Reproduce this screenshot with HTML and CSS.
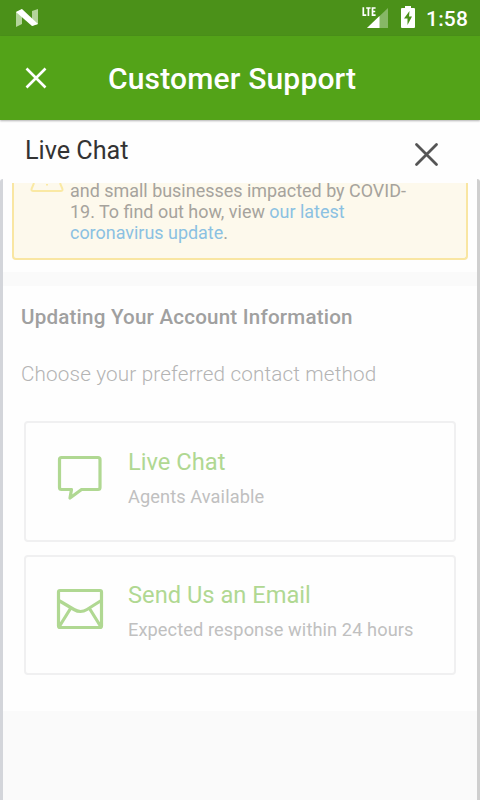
FILE: index.html
```html
<!DOCTYPE html>
<html lang="en">
<head>
<meta charset="utf-8">
<title>Customer Support</title>
<link rel="stylesheet" href="styles.css">
</head>
<body>
<div class="status">
  <svg class="n-logo" width="24" height="20" viewBox="0 0 24 20"><path d="M1 4L7 1v15l-6 3zM17 3l6-2v15l-6 2z" fill="#b4d49b"/><path d="M1 4l6-3 16 15-6 2z" fill="#fff"/></svg>
  <svg class="signal" width="28" height="24" viewBox="0 0 28 24"><path d="M6 22L27 2v20z" fill="#87b766"/><path d="M6 22L18.500 10v12z" fill="#fff"/><path d="M2.300 1.200v8.800M2.300 9.200h3M5.200 2h4.400M7.400 2v8M14.600 2h-3.100v7.200h3.100M11.500 5.500h2.700" fill="none" stroke="#fff" stroke-width="1.700"/></svg>
  <svg class="battery" width="14" height="22" viewBox="0 0 14 22"><path d="M4 0h6v2h3q1 0 1 1v18q0 1-1 1H1q-1 0-1-1V3q0-1 1-1h3z" fill="#fff"/><path d="M8.500 5L3 12.500h3.500V19L11 10.500H8z" fill="#4b9119"/></svg>
  <span class="clock">1:58</span>
</div>
<header class="appbar">
  <svg class="close" width="24" height="24" viewBox="0 0 24 24"><path d="M2.500 2.500l19 19M21.500 2.500l-19 19" fill="none" stroke="#fff" stroke-width="2.600"/></svg>
  <h1 class="title">Customer Support</h1>
</header>
<div class="chatbar">
  <span class="chat-title">Live Chat</span>
  <svg class="dismiss" width="26" height="26" viewBox="0 0 26 26"><path d="M3.500 2.500l20 20M23.500 2.500l-20 20" fill="none" stroke="#555" stroke-width="2.800" stroke-linecap="round"/></svg>
</div>
<main class="frame">
  <section class="notice-wrap">
    <div class="notice">
      <svg class="warn" width="34" height="10" viewBox="0 0 34 10"><path d="M4 0L1.700 5.500Q.8 8 3.500 8h27q2.700 0 1.800-2.500L30 0M17 1v1.500" fill="none" stroke="#fae9a4" stroke-width="2"/></svg>
      <p class="notice-text">and small businesses impacted by COVID-<br>19. To find out how, view <a>our latest<br>coronavirus update</a>.</p>
    </div>
  </section>
  <section class="panel">
    <h2 class="heading">Updating Your Account Information</h2>
    <p class="sub">Choose your preferred contact method</p>
    <div class="card">
      <svg class="card-icon" width="48" height="46" viewBox="0 0 48 46"><path d="M5.500 2.500h36.500q2 0 2 2v28q0 2-2 2H25.500L14 43l1.500-8.500H5.500q-2 0-2-2v-28q0-2 2-2z" fill="none" stroke="#b0d892" stroke-width="3.200" stroke-linejoin="round"/></svg>
      <div><div class="card-title">Live Chat</div><div class="card-text">Agents Available</div></div>
    </div>
    <div class="card second">
      <svg class="card-icon" width="48" height="46" viewBox="0 0 48 46"><path d="M4 2.500h40q1.500 0 1.500 1.500v34q0 1.500-1.500 1.500H4q-1.500 0-1.500-1.500V4q0-1.500 1.500-1.500zM2 12l16 9.500q6.500 4 13 0L46 12M14.500 20.500L3 39M33.500 20.500l11.500 18.500" fill="none" stroke="#b0d892" stroke-width="3.200" stroke-linejoin="round"/></svg>
      <div><div class="card-title">Send Us an Email</div><div class="card-text">Expected response within 24 hours</div></div>
    </div>
  </section>
</main>
</body>
</html>
```
FILE: styles.css
```css
* { box-sizing: border-box; }
body { margin: 0; width: 480px; height: 800px; overflow: hidden; display: flex; flex-direction: column; background: #fefefe; font-family: Roboto, sans-serif; }
h1, h2, p { margin: 0; }
.status { height: 36px; flex: none; display: flex; background: #4b9119; color: #fff; }
.n-logo { margin: 8px 0 0 15px; }
.signal { margin: 6px 0 0 322px; }
.battery { margin: 6px 0 0 12px; }
.clock { margin: 6px 0 0 11px; font-size: 21px; line-height: 26px; font-weight: 500; letter-spacing: .2px; white-space: nowrap; }
.appbar { height: 84px; flex: none; display: flex; background: #53a318; color: #fff; box-shadow: 0 1px 2px rgba(0,0,0,.3); }
.close { margin: 30px 0 0 24px; }
.title { margin: 23px 0 0 60px; font-size: 30px; line-height: 40px; font-weight: 500; letter-spacing: .17px; white-space: nowrap; }
.chatbar { height: 59px; flex: none; display: flex; justify-content: space-between; padding: 0 41px 0 25px; }
.chat-title { margin-top: 13px; font-size: 25.200px; line-height: 36px; color: #333; }
.dismiss { margin-top: 22px; }
.frame { flex: 1; min-height: 0; border-left: 3px solid #d3d5da; border-right: 3px solid #cfcfcf; border-radius: 3px 3px 0 0; background: #fafafa; }
.notice-wrap { height: 93px; padding: 4px 9px 0; background: #fefefe; }
.notice { height: 77px; display: flex; padding-left: 16px; border: 2px solid #f9e6a2; border-top: 0; border-radius: 0 0 4px 4px; background: #fdf9ec; }
.warn { flex: none; }
.notice-text { margin: -3px 0 0 6px; font-size: 17.950px; line-height: 21px; color: #a6a39d; white-space: nowrap; }
.notice-text a { color: #8bc1e2; }
.panel { height: 425px; margin-top: 14px; padding: 18px 21px 0; background: #fefefe; }
.heading { margin-left: -3px; font-size: 20.600px; line-height: 26px; font-weight: 500; letter-spacing: .2px; color: #a0a0a0; white-space: nowrap; }
.sub { margin: 31px 0 34px -3px; font-size: 20.700px; line-height: 26px; font-weight: 300; letter-spacing: .15px; color: #b4b4b4; white-space: nowrap; }
.card { height: 121px; margin-bottom: 13px; display: flex; border: 2px solid #f0f0f1; border-radius: 4px; width: 432px; }
.card-icon { margin: 32px 0 0 30px; flex: none; }
.card-title { margin: 23px 0 0 24px; font-size: 23.700px; line-height: 32px; color: #b0d892; white-space: nowrap; }
.card-text { margin: 7px 0 0 24px; font-size: 18.200px; line-height: 24px; letter-spacing: .1px; color: #c0c0c0; white-space: nowrap; }
.second { height: 120px; }
.second .card-icon { margin-top: 31px; }
.second .card-title { margin-top: 22px; }
```
